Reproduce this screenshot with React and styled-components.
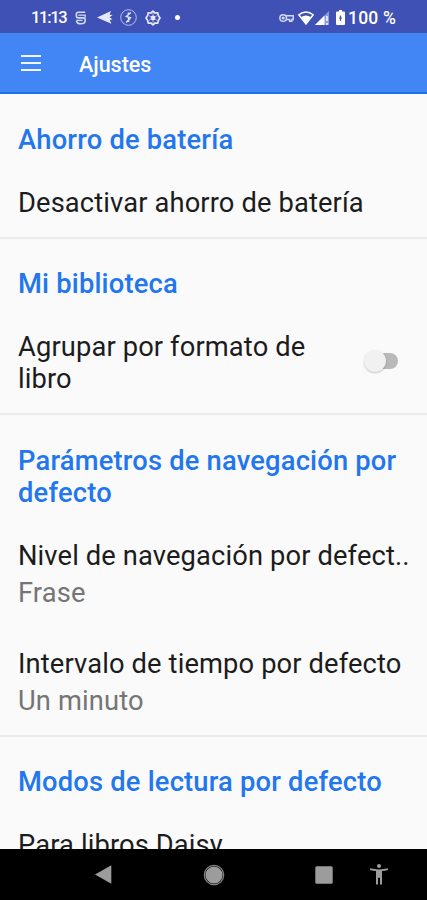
import React from 'react'
import styled, { createGlobalStyle } from 'styled-components'

const sections = [
  {
    title: 'Ahorro de batería',
    rows: [{ label: 'Desactivar ahorro de batería' }],
  },
  {
    title: 'Mi biblioteca',
    rows: [{ label: 'Agrupar por formato de libro', toggle: true }],
  },
  {
    title: 'Parámetros de navegación por defecto',
    rows: [
      { label: 'Nivel de navegación por defect..', value: 'Frase' },
      { label: 'Intervalo de tiempo por defecto', value: 'Un minuto' },
    ],
  },
  {
    title: 'Modos de lectura por defecto',
    rows: [{ label: 'Para libros Daisy' }],
  },
]

const StatusBar = () => (
  <Status>
    <Clock>11:13</Clock>
    <StatusIcons>
      <svg width='12' height='14' viewBox='0 0 12 14' fill='none' stroke='#d5daf6' strokeWidth='1.6'>
        <path d='M10.2 1.2H3.4Q1.4 1.2 1.4 3V5Q1.4 6.9 3.2 6.9H8.6Q10.2 6.9 10.2 8.6V9.5Q10.2 12.8 6 12.8Q1.5 12.8 1.5 9.6' />
        <path d='M3.4 4.1H10.2V6.4M1.5 9.4H7.6' strokeWidth='1.3' />
      </svg>
      <svg width='16' height='13' viewBox='0 0 16 13' fill='#e6e9fb'>
        <path d='M0 6.5L14 0L12.6 3.5L15.5 4.2L12.5 6.2L15.5 8.2L12.8 9L14.4 12.8Z' />
      </svg>
      <svg width='17' height='17' viewBox='0 0 17 17' fill='none' stroke='#b9c1ee'>
        <circle cx='8.5' cy='8.5' r='7.8' strokeWidth='1' />
        <path d='M10.8 3.5L6.4 7.4L10.4 8.8L6.2 13.4M8.4 3.5V6M8.6 9V13' stroke='#dfe3fa' strokeWidth='1.5' />
      </svg>
      <svg width='16' height='16' viewBox='0 0 16 16' fill='none' stroke='#e6e9fb'>
        <path d='M8 1.2L10 3L12.8 2.9L13.4 5.6L15 8L13.4 10.4L12.8 13.1L10 13L8 14.8L6 13L3.2 13.1L2.6 10.4L1 8L2.6 5.6L3.2 2.9L6 3Z' strokeWidth='1.7' strokeLinejoin='round' />
        <circle cx='8' cy='8' r='2.4' fill='#e6e9fb' stroke='none' />
        <path d='M8 3V13M3.7 5.5L12.3 10.5M12.3 5.5L3.7 10.5' strokeWidth='0.6' />
      </svg>
      <Dot />
    </StatusIcons>
    <Signals>
      <svg width='15' height='10' viewBox='0 0 15 10' fill='none' stroke='#d5daf6' strokeWidth='1.5'>
        <circle cx='4.2' cy='5' r='3.3' />
        <circle cx='4.2' cy='5' r='0.8' />
        <path d='M7 2.8H14.2V6.5H12.8V8.3H10.6V6.5H7.2' />
      </svg>
      <svg width='16' height='14' viewBox='0 0 16 14'>
        <path d='M0.8 3.8Q8 -1.8 15.2 3.8L8 13Z' fill='none' stroke='#fff' strokeWidth='1.4' />
        <path d='M3.2 6Q8 2.8 12.8 6L8 13Z' fill='#fff' />
      </svg>
      <svg width='14' height='14' viewBox='0 0 14 14'>
        <path d='M0 14L14 0V14Z' fill='#8f9ad6' />
        <path d='M0 14L9.5 4.5V14Z' fill='#fff' />
        <path d='M12 5V10M12 12V14' stroke='#fff' strokeWidth='1.4' />
      </svg>
      <Battery width='9' height='15' viewBox='0 0 9 15'>
        <path d='M3 0H6V1.5H8Q9 1.5 9 2.5V14Q9 15 8 15H1Q0 15 0 14V2.5Q0 1.5 1 1.5H3Z' fill='#fff' />
        <path d='M4.5 5.5V11M3.2 8.2H5.8' stroke='#3f51b5' strokeWidth='1.2' />
      </Battery>
      <Percent>100 %</Percent>
    </Signals>
  </Status>
)

const Setting = ({ label, value, toggle }) => (
  <Row>
    <div className='text'>
      <Label $wrap={toggle}>{label}</Label>
      {value && <Value>{value}</Value>}
    </div>
    {toggle && (
      <Switch>
        <Thumb />
      </Switch>
    )}
  </Row>
)

const App = () => {
  return (
    <Screen>
      <GlobalStyle />
      <StatusBar />
      <Toolbar>
        <Burger>
          <span />
          <span />
          <span />
        </Burger>
        <h1>Ajustes</h1>
      </Toolbar>
      <Content>
        {sections.map((section) => (
          <Section key={section.title}>
            <SectionTitle>{section.title}</SectionTitle>
            <Rows>
              {section.rows.map((row) => (
                <Setting key={row.label} {...row} />
              ))}
            </Rows>
          </Section>
        ))}
      </Content>
      <NavBar>
        <svg width='17' height='19' viewBox='0 0 17 19'>
          <path d='M0 9.5L16.3 0.3V18.7Z' fill='#9c9c9c' />
        </svg>
        <svg width='22' height='22' viewBox='0 0 22 22'>
          <circle cx='11' cy='11' r='9.7' fill='none' stroke='#858585' strokeWidth='1.2' />
          <circle cx='11' cy='11' r='8.6' fill='#9c9c9c' />
        </svg>
        <svg width='18' height='18' viewBox='0 0 18 18'>
          <rect x='0.3' y='0.3' width='17.4' height='17.4' rx='1.5' fill='#9c9c9c' />
        </svg>
        <svg width='18' height='21' viewBox='0 0 18 21' fill='#9c9c9c'>
          <circle cx='9' cy='2.1' r='2' />
          <path d='M0.2 4.3Q9 6.6 17.8 4.3L18 6Q15 6.8 12 7.1V20.6H10V13.8H8V20.6H6V7.1Q3 6.8 0 6Z' />
        </svg>
      </NavBar>
    </Screen>
  )
}

export default App

const GlobalStyle = createGlobalStyle`
  * {
    box-sizing: border-box;
  }
  body {
    margin: 0;
    font-family: Roboto, sans-serif;
  }
`

const Screen = styled.div`
  display: flex;
  flex-direction: column;
  width: 427px;
  height: 900px;
  overflow: hidden;
  background: #fafafa;
`

const Status = styled.header`
  display: flex;
  align-items: center;
  flex: none;
  height: 33px;
  padding: 2px 28px 0 31px;
  background: #3f51b5;
  color: #fff;
  svg {
    display: block;
    flex: none;
  }
`

const Clock = styled.span`
  width: 44px;
  font-size: 16.5px;
  font-weight: 500;
  letter-spacing: -1.3px;
`

const StatusIcons = styled.div`
  display: flex;
  align-items: center;
  svg:nth-child(2) {
    margin-left: 10px;
  }
  svg:nth-child(3) {
    margin-left: 7px;
  }
  svg:nth-child(4) {
    margin-left: 8px;
  }
`

const Dot = styled.i`
  width: 5px;
  height: 5px;
  margin-left: 14px;
  border-radius: 50%;
  background: #fff;
`

const Signals = styled.div`
  display: flex;
  align-items: center;
  margin-left: auto;
  svg:nth-child(2) {
    margin-left: 4px;
  }
  svg:nth-child(3) {
    margin-left: 1px;
  }
`

const Battery = styled.svg`
  margin-left: 7px;
`

const Percent = styled.span`
  width: 51px;
  margin-left: 3px;
  font-size: 17.5px;
  font-weight: 500;
  letter-spacing: 0.2px;
  white-space: nowrap;
`

const Toolbar = styled.div`
  display: flex;
  align-items: center;
  flex: none;
  height: 61px;
  padding-left: 21px;
  border-bottom: 2px solid #1a73e8;
  background: #4285f4;
  color: #fff;
  h1 {
    margin: 5px 0 0 38px;
    font-size: 21.5px;
    line-height: 26px;
    font-weight: 500;
  }
`

const Burger = styled.div`
  display: flex;
  flex-direction: column;
  gap: 5px;
  width: 20px;
  margin-top: 1px;
  span {
    height: 2px;
    background: #f1f5ff;
  }
`

const Content = styled.main`
  flex: 1;
  min-height: 0;
  overflow: hidden;
`

const Section = styled.section`
  padding: 30px 10px 18px 18px;
  & + & {
    border-top: 2px solid #ebebeb;
    padding-top: 29px;
  }
  &:nth-child(3) {
    padding-top: 30px;
  }
`

const SectionTitle = styled.h2`
  margin: 0 0 31px;
  color: #2276ee;
  font-size: 27.3px;
  line-height: 32px;
  font-weight: 500;
  letter-spacing: 0.2px;
`

const Rows = styled.div`
  display: flex;
  flex-direction: column;
  gap: 39px;
`

const Row = styled.div`
  display: flex;
  align-items: center;
  justify-content: space-between;
  font-size: 27.3px;
  line-height: 32px;
  letter-spacing: 0.13px;
`

const Label = styled.div`
  max-width: ${(props) => (props.$wrap ? '310px' : 'none')};
  color: #1c1c1c;
  white-space: ${(props) => (props.$wrap ? 'normal' : 'nowrap')};
`

const Value = styled.div`
  margin-top: 4.9px;
  color: #757575;
`

const Switch = styled.div`
  display: flex;
  align-items: center;
  width: 34px;
  height: 16px;
  margin: -4px 19px 0 0;
  border-radius: 8px;
  background: linear-gradient(to right, transparent 10px, #b9b9b9 10px);
`

const Thumb = styled.div`
  flex: none;
  width: 22px;
  height: 22px;
  border-radius: 50%;
  background: #f1f1f1;
  box-shadow: 0 1px 2px rgba(0, 0, 0, 0.22);
`

const NavBar = styled.footer`
  display: flex;
  align-items: center;
  flex: none;
  height: 51px;
  padding-left: 95px;
  background: #000;
  svg:nth-child(2) {
    margin-left: 91px;
  }
  svg:nth-child(3) {
    margin-left: 90px;
  }
  svg:nth-child(4) {
    margin-left: 37px;
  }
`
